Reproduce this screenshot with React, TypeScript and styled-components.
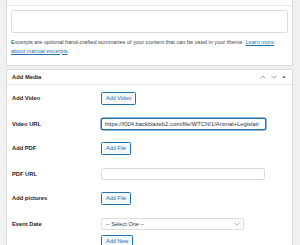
import React from 'react';
import styled, {createGlobalStyle} from 'styled-components';

const GlobalStyle = createGlobalStyle`
	html, body {
		margin: 0;
		background: #f0f0f1;
		font-family: "Liberation Sans", Arial, sans-serif;
		color: #1d2327;
	}
`;

const Page = styled.div`
	display: flex;
	flex-direction: column;
	gap: 3px;
	margin-top: -12px;
	padding: 0 7px 20px 6px;
`;

const Panel = styled.section`
	background: #fff;
	border: 1px solid #dcdcde;
`;

const PanelHeader = styled.header<{ $h: number }>`
	display: flex;
	align-items: center;
	height: ${p => p.$h}px;
	padding: 0 5px;
	border-bottom: 1px solid #e6e6e8;
	> h2 {
		margin: 0;
		font-size: 5.8px;
		font-weight: 700;
		flex: 1;
	}
`;

const HandleActions = styled.div`
	display: flex;
	align-items: center;
	gap: 5px;
	margin-right: 1px;
`;

const ExcerptBody = styled.div`
	padding: 4px 4px 9px 4px;
`;

const TextArea = styled.div`
	height: 21px;
	border: 1px solid #dcdcde;
	border-radius: 2px;
`;

const Description = styled.p`
	margin: 4.5px 10px 0 0;
	font-size: 5.6px;
	line-height: 9px;
	color: #3c434a;
	a {
		color: #2271b1;
		text-decoration: underline;
	}
`;

const FormGrid = styled.div`
	display: grid;
	grid-template-columns: 89px 1fr;
	row-gap: 12.6px;
	align-items: start;
	padding: 7.5px 5px 0 5px;
`;

const Label = styled.label`
	font-size: 5.75px;
	font-weight: 700;
	line-height: 12px;
	color: #1d2327;
`;

const Field = styled.div`
	display: flex;
	flex-direction: column;
	align-items: flex-start;
	gap: 5px;
`;

const Button = styled.button`
	height: 13px;
	padding: 0 4px;
	font-family: inherit;
	font-size: 5.5px;
	line-height: 11px;
	color: #2271b1;
	background: #f6f7f7;
	border: 1px solid #2271b1;
	border-radius: 1.5px;
	box-sizing: border-box;
`;

const TextInput = styled.div<{ $focus?: boolean; $width: number }>`
	width: ${p => p.$width}px;
	height: 12px;
	box-sizing: border-box;
	padding: 0 3px;
	font-size: 5.85px;
	line-height: 10px;
	color: #2c3338;
	white-space: nowrap;
	overflow: hidden;
	border: 1px solid ${p => p.$focus ? '#2271b1' : '#dcdcde'};
	box-shadow: ${p => p.$focus ? '0 0 0 0.5px #2271b1' : 'none'};
	border-radius: 2px;
	background: #fff;
`;

const Select = styled.div`
	display: flex;
	align-items: center;
	justify-content: space-between;
	width: 143px;
	height: 12px;
	box-sizing: border-box;
	padding: 0 3px 0 4px;
	font-size: 5.6px;
	color: #2c3338;
	border: 1px solid #dcdcde;
	border-radius: 2px;
	background: #fff;
`;

const Chevron = ({up}: { up?: boolean }) => (
	<svg width="6" height="4" viewBox="0 0 6 4">
		<path d={up ? 'M0.5 3.5L3 1L5.5 3.5' : 'M0.5 0.8L3 3.2L5.5 0.8'} fill="none" stroke="#8c8f94" strokeWidth="0.8"/>
	</svg>
);

const rows = [
	{label: 'Add Video', kind: 'button', text: 'Add Video'},
	{label: 'Video URL', kind: 'input', text: 'https://f004.backblazeb2.com/file/WTCNI1/Animal+Legislati', focus: true, width: 165},
	{label: 'Add PDF', kind: 'button', text: 'Add File'},
	{label: 'PDF URL', kind: 'input', text: '', width: 164},
	{label: 'Add pictures', kind: 'button', text: 'Add File'},
];

export default function App() {
	return (
		<>
			<GlobalStyle/>
			<Page>
				<Panel>
					<PanelHeader $h={16}><h2>Excerpt</h2></PanelHeader>
					<ExcerptBody>
						<TextArea/>
						<Description>
							Excerpts are optional hand-crafted summaries of your content that can be used in your theme. <a>Learn more about manual excerpts</a>.
						</Description>
					</ExcerptBody>
				</Panel>
				<Panel>
					<PanelHeader $h={14}>
						<h2>Add Media</h2>
						<HandleActions>
							<Chevron up/>
							<Chevron/>
							<svg width="4" height="3" viewBox="0 0 4 3">
								<path d="M0 3L2 0.6L4 3Z" fill="#787c82"/>
							</svg>
						</HandleActions>
					</PanelHeader>
					<FormGrid>
						{rows.map(row =>
							<React.Fragment key={row.label}>
								<Label>{row.label}</Label>
								<Field>
									{row.kind === 'button'
										? <Button>{row.text}</Button>
										: <TextInput $focus={row.focus} $width={row.width!}>{row.text}</TextInput>}
								</Field>
							</React.Fragment>)}
						<Label>Event Date</Label>
						<Field>
							<Select>
								<span>-- Select One --</span>
								<Chevron/>
							</Select>
							<Button>Add New</Button>
						</Field>
					</FormGrid>
				</Panel>
			</Page>
		</>
	);
}
